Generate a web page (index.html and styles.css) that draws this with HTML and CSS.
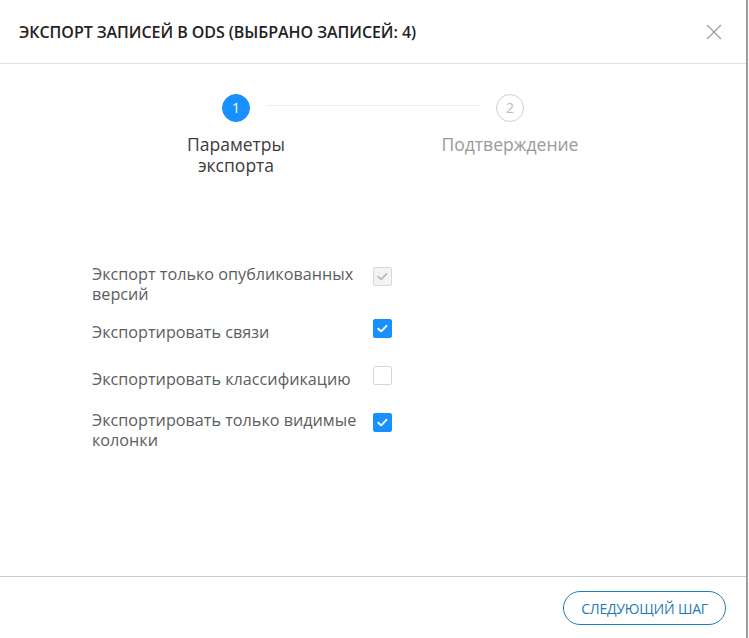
FILE: index.html
```html
<html>
<head>
  <link rel="stylesheet" href="styles.css">
</head>
<body>
  <div class="modal">
    <div class="modal-header">
      <h1 class="modal-header_title">Экспорт записей в ODS (выбрано записей: 4)</h1>
      <button class="modal-header_close" type="button" aria-label="close">
        <svg width="16" height="16" viewBox="0 0 16 16">
          <path d="M1 1 L15 15 M15 1 L1 15" stroke="#9a9a9a" stroke-width="1.1" fill="none"/>
        </svg>
      </button>
    </div>

    <div class="modal-body">
      <div class="steps">
        <div class="steps_item steps_item--active">
          <div class="steps_circle">1</div>
          <div class="steps_label">Параметры экспорта</div>
        </div>
        <div class="steps_item">
          <div class="steps_circle">2</div>
          <div class="steps_label">Подтверждение</div>
        </div>
      </div>

      <div class="options">
        <div class="options_row">
          <div class="options_label">Экспорт только опубликованных версий</div>
          <span class="check check--disabled">
            <svg viewBox="0 0 20 20"><path d="M5.5 10.2 L8.6 13 L14.2 7.2" /></svg>
          </span>
        </div>
        <div class="options_row options_row--single">
          <div class="options_label">Экспортировать связи</div>
          <span class="check check--on">
            <svg viewBox="0 0 20 20"><path d="M5.5 10.2 L8.6 13 L14.2 7.2" /></svg>
          </span>
        </div>
        <div class="options_row options_row--single">
          <div class="options_label">Экспортировать классификацию</div>
          <span class="check"></span>
        </div>
        <div class="options_row">
          <div class="options_label">Экспортировать только видимые колонки</div>
          <span class="check check--on">
            <svg viewBox="0 0 20 20"><path d="M5.5 10.2 L8.6 13 L14.2 7.2" /></svg>
          </span>
        </div>
      </div>
    </div>

    <div class="modal-footer">
      <button class="modal-footer_next" type="button">Следующий шаг</button>
    </div>
  </div>
</body>
</html>
```

FILE: styles.css
```css
body {
  margin: 0;
  background: #fff;
  font-family: "Open Sans", "Noto Sans", sans-serif;
}
.modal {
  width: 746px;
  height: 638px;
  display: flex;
  flex-direction: column;
  border-right: 2px solid #9c9c9c;
  background: #fff;
}
.modal-header {
  height: 63px;
  display: flex;
  align-items: center;
  justify-content: space-between;
  padding: 0 24px 0 19px;
  border-bottom: 1px solid #e0e0e0;
}
.modal-header_title {
  margin: 0;
  font-size: 16px;
  font-weight: 600;
  letter-spacing: -0.05px;
  text-transform: uppercase;
  color: #222;
}
.modal-header_close {
  border: none;
  background: none;
  padding: 0;
  width: 16px;
  height: 16px;
  margin-top: 1px;
}
.modal-body {
  flex: 1;
}
.steps {
  display: flex;
  justify-content: center;
  gap: 134px;
  padding-top: 30px;
}
.steps_item {
  width: 140px;
  display: flex;
  flex-direction: column;
  align-items: center;
}
.steps_circle {
  position: relative;
  width: 28px;
  height: 28px;
  box-sizing: border-box;
  border-radius: 50%;
  border: 1px solid #cfcfcf;
  color: #bcbcbc;
  font-size: 14px;
  line-height: 26px;
  text-align: center;
}
.steps_item--active .steps_circle {
  background: #1890ff;
  border-color: #1890ff;
  color: #fff;
}
.steps_item--active .steps_circle::after {
  content: "";
  position: absolute;
  left: 44px;
  top: 10px;
  width: 214px;
  height: 1px;
  background: #ececec;
}
.steps_label {
  margin-top: 12px;
  font-size: 17.5px;
  line-height: 21px;
  text-align: center;
  color: #9a9a9a;
  white-space: nowrap;
}
.steps_item--active .steps_label {
  color: #3c3c3c;
  width: 114px;
  white-space: normal;
}
.options {
  padding: 88px 0 0 92px;
}
.options_row {
  display: flex;
  align-items: flex-start;
  gap: 10px;
  margin-bottom: 12px;
}
.options_label {
  width: 271px;
  font-size: 16.2px;
  line-height: 20px;
  color: #5d5d5d;
}
.options_row--single .options_label {
  padding: 6px 0 9px;
}
.check {
  width: 19px;
  height: 19px;
  box-sizing: border-box;
  margin-top: 3px;
  border: 1px solid #d6d6d6;
  border-radius: 2px;
  background: #fff;
  display: flex;
}
.check svg {
  width: 19px;
  height: 19px;
  margin: -1px;
}
.check path {
  fill: none;
  stroke: #fff;
  stroke-width: 2;
  stroke-linecap: round;
  stroke-linejoin: round;
}
.check--on {
  background: #1890ff;
  border-color: #1890ff;
}
.check--disabled {
  background: #f3f3f3;
  border-color: #d9d9d9;
}
.check--disabled path {
  stroke: #bdbdbd;
}
.modal-footer {
  height: 62px;
  box-sizing: border-box;
  border-top: 1px solid #cacaca;
  display: flex;
  justify-content: flex-end;
  align-items: flex-start;
  padding: 14px 20px 0 0;
}
.modal-footer_next {
  width: 163px;
  height: 34px;
  border: 1px solid #1b7fc4;
  border-radius: 17px;
  background: #fff;
  color: #1f7ab8;
  font-family: "Open Sans", "Noto Sans", sans-serif;
  font-size: 14px;
  text-transform: uppercase;
  letter-spacing: -0.2px;
}
```
